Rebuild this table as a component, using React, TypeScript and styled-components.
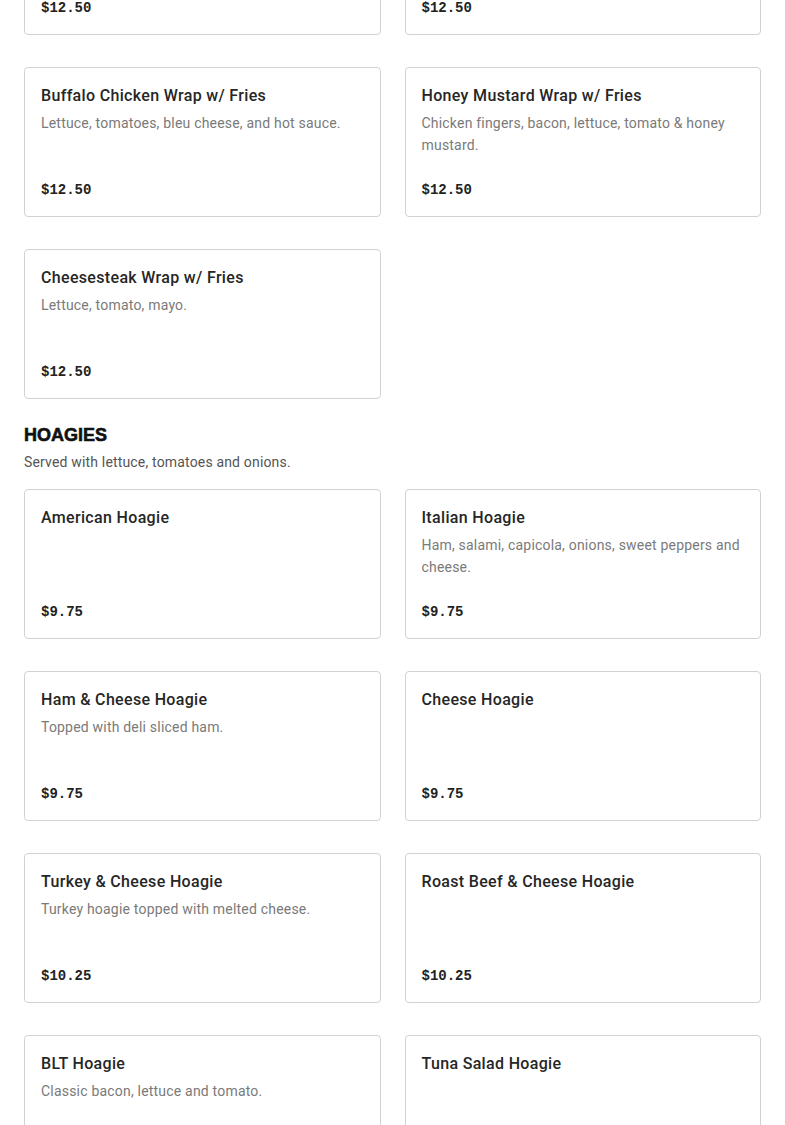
import styled, { createGlobalStyle } from "styled-components";

interface MenuItem {
  name: string;
  description?: string;
  price: string;
}

const wraps: MenuItem[] = [
  { name: "Chicken Caesar Wrap w/ Fries", description: "Grilled chicken, romaine and caesar.", price: "$12.50" },
  { name: "Turkey Club Wrap w/ Fries", description: "Turkey, bacon, lettuce, tomato & mayo.", price: "$12.50" },
  { name: "Buffalo Chicken Wrap w/ Fries", description: "Lettuce, tomatoes, bleu cheese, and hot sauce.", price: "$12.50" },
  { name: "Honey Mustard Wrap w/ Fries", description: "Chicken fingers, bacon, lettuce, tomato & honey mustard.", price: "$12.50" },
  { name: "Cheesesteak Wrap w/ Fries", description: "Lettuce, tomato, mayo.", price: "$12.50" },
];

const hoagies: MenuItem[] = [
  { name: "American Hoagie", price: "$9.75" },
  { name: "Italian Hoagie", description: "Ham, salami, capicola, onions, sweet peppers and cheese.", price: "$9.75" },
  { name: "Ham & Cheese Hoagie", description: "Topped with deli sliced ham.", price: "$9.75" },
  { name: "Cheese Hoagie", price: "$9.75" },
  { name: "Turkey & Cheese Hoagie", description: "Turkey hoagie topped with melted cheese.", price: "$10.25" },
  { name: "Roast Beef & Cheese Hoagie", price: "$10.25" },
  { name: "BLT Hoagie", description: "Classic bacon, lettuce and tomato.", price: "$10.25" },
  { name: "Tuna Salad Hoagie", price: "$10.25" },
];

function ItemGrid({ items }: { items: MenuItem[] }) {
  return (
    <Grid>
      {items.map((item) => (
        <Card key={item.name}>
          <ItemName>{item.name}</ItemName>
          {item.description && <ItemDescription>{item.description}</ItemDescription>}
          <Price>{item.price}</Price>
        </Card>
      ))}
    </Grid>
  );
}

export default function App() {
  return (
    <>
      <GlobalStyle />
      <Page>
        {/* page is scrolled: only the end of the wraps section shows */}
        <Section $scrolled>
          <ItemGrid items={wraps} />
        </Section>
        <Section>
          <SectionTitle>HOAGIES</SectionTitle>
          <SectionNote>Served with lettuce, tomatoes and onions.</SectionNote>
          <ItemGrid items={hoagies} />
        </Section>
      </Page>
    </>
  );
}

const GlobalStyle = createGlobalStyle`
  html, body {
    margin: 0;
    padding: 0;
    background: #fff;
    overflow: hidden;
  }
  body {
    font-family: Roboto, "Liberation Sans", sans-serif;
    color: #2b2b2b;
  }
`;

const Page = styled.main`
  padding: 0 24px;
  height: 1125px;
  overflow: hidden;
`;

const Section = styled.section<{ $scrolled?: boolean }>`
  margin-top: ${(p) => (p.$scrolled ? "-115px" : "24px")};
`;

const SectionTitle = styled.h2`
  margin: 0;
  font-family: "Liberation Sans", Arial, sans-serif;
  font-weight: 700;
  font-size: 18px;
  line-height: 24px;
  color: #111;
  -webkit-text-stroke: 0.6px #111;
`;

const SectionNote = styled.p`
  margin: 4px 0 16px;
  font-size: 14px;
  line-height: 22px;
  letter-spacing: 0.17px;
  color: #555;
`;

const Grid = styled.div`
  display: grid;
  grid-template-columns: 1fr 1fr;
  column-gap: 24px;
  row-gap: 32px;
`;

const Card = styled.article`
  box-sizing: border-box;
  height: 150px;
  display: flex;
  flex-direction: column;
  padding: 16px;
  border: 1px solid #d2d2d2;
  border-radius: 4px;
  background: #fff;
`;

const ItemName = styled.h3`
  margin: 0;
  font-weight: 500;
  font-size: 16px;
  line-height: 24px;
  letter-spacing: 0.33px;
  color: #262626;
`;

const ItemDescription = styled.p`
  margin: 4px 0 0;
  font-size: 14px;
  line-height: 22px;
  letter-spacing: 0.2px;
  color: #7a7a7a;
`;

const Price = styled.div`
  margin-top: auto;
  font-family: "Liberation Mono", "Courier New", monospace;
  font-weight: 700;
  font-size: 14px;
  line-height: 20px;
  color: #222;
`;
